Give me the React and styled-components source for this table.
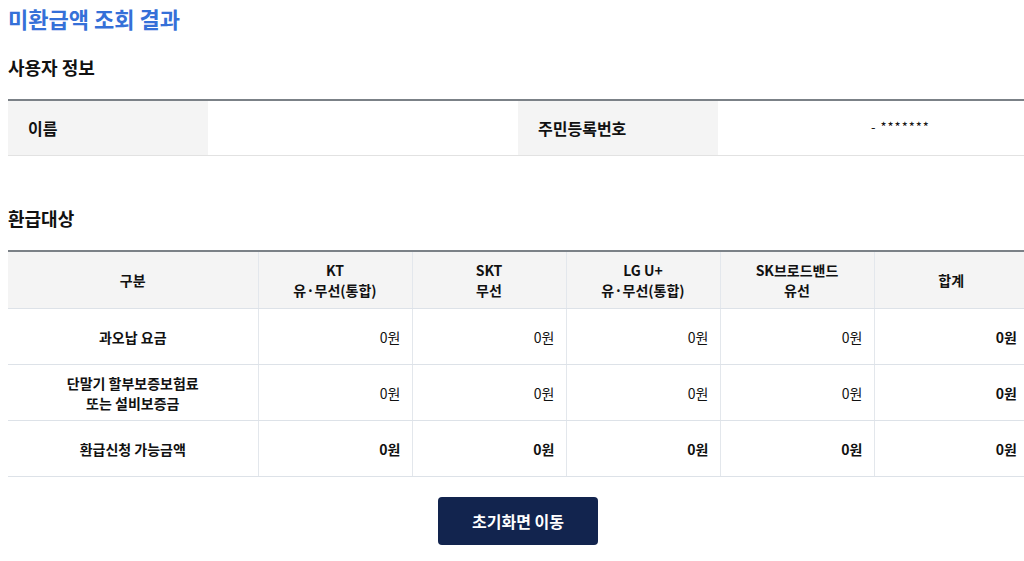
import React from 'react'
import styled, { createGlobalStyle } from 'styled-components'

const GlobalStyle = createGlobalStyle`
  html, body {
    margin: 0;
    padding: 0;
    overflow: hidden;
    background: #fff;
  }
  body {
    font-family: "Noto Sans CJK KR", "Noto Sans", sans-serif;
    color: #111;
  }
`

const Page = styled.div`
  width: 1020px;
  padding: 0 8px;
`

const Title = styled.h1`
  margin: 6px 0 0;
  font-size: 22px;
  line-height: 24px;
  font-weight: 700;
  color: #3570d8;
`

const SectionTitle = styled.h2`
  margin: ${props => props.$top}px 0 20px;
  font-size: 18px;
  line-height: 24px;
  font-weight: 700;
  color: #111;
`

const InfoTable = styled.div`
  display: grid;
  grid-template-columns: 200px 310px 200px 310px;
  border-top: 2px solid #7b8187;
  border-bottom: 1px solid #e2e2e2;
  height: 54px;
`

const InfoLabel = styled.div`
  display: flex;
  align-items: center;
  padding-left: 20px;
  background: #f4f4f4;
  font-size: 16px;
  font-weight: 700;
`

const InfoValue = styled.div`
  display: flex;
  align-items: center;
  padding-left: ${props => props.$indent || 0}px;
  padding-bottom: 4px;
  font-size: 13px;
  letter-spacing: 1px;
`

const Table = styled.table`
  width: 1020px;
  border-collapse: collapse;
  table-layout: fixed;
  border-top: 2px solid #7b8187;
  font-size: 14px;
`

const Th = styled.th`
  height: 56px;
  padding: 0;
  background: #f4f4f4;
  font-weight: 700;
  line-height: 20px;
  border-bottom: 1px solid #dde2e8;
  border-left: 1px solid #e3e7ec;
  &:first-child { border-left: none; }
`

const RowHead = styled.td`
  height: 55px;
  padding: 0;
  text-align: center;
  font-weight: 700;
  line-height: 20px;
  border-bottom: 1px solid #dde2e8;
`

const Amount = styled.td`
  padding: 0 11px 0 0;
  text-align: right;
  font-weight: ${props => (props.$bold ? 700 : 400)};
  border-bottom: 1px solid #dde2e8;
  border-left: 1px solid #e3e7ec;
`

const Actions = styled.div`
  display: flex;
  justify-content: center;
  margin-top: 20px;
`

const Button = styled.button`
  width: 160px;
  height: 48px;
  border: none;
  border-radius: 4px;
  background: #12244e;
  color: #fff;
  font-family: inherit;
  font-size: 16px;
  font-weight: 700;
  cursor: pointer;
`

const columns = [
  ['KT', '유·무선(통합)'],
  ['SKT', '무선'],
  ['LG U+', '유·무선(통합)'],
  ['SK브로드밴드', '유선'],
]

const rows = [
  { label: ['과오납 요금'], bold: false },
  { label: ['단말기 할부보증보험료', '또는 설비보증금'], bold: false },
  { label: ['환급신청 가능금액'], bold: true },
]

const Lines = ({ lines }) =>
  lines.map((line, i) => (
    <React.Fragment key={i}>
      {i > 0 && <br />}
      {line}
    </React.Fragment>
  ))

export default function App() {
  return (
    <Page>
      <GlobalStyle />
      <Title>미환급액 조회 결과</Title>

      <SectionTitle $top={25}>사용자 정보</SectionTitle>
      <InfoTable>
        <InfoLabel>이름</InfoLabel>
        <InfoValue />
        <InfoLabel>주민등록번호</InfoLabel>
        <InfoValue $indent={153}>- *******</InfoValue>
      </InfoTable>

      <SectionTitle $top={50}>환급대상</SectionTitle>
      <Table>
        <colgroup>
          <col style={{ width: 250 }} />
          {columns.map((_, i) => (
            <col key={i} style={{ width: 154 }} />
          ))}
          <col style={{ width: 154 }} />
        </colgroup>
        <thead>
          <tr>
            <Th>구분</Th>
            {columns.map((c, i) => (
              <Th key={i}>
                <Lines lines={c} />
              </Th>
            ))}
            <Th>합계</Th>
          </tr>
        </thead>
        <tbody>
          {rows.map((r, i) => (
            <tr key={i}>
              <RowHead>
                <Lines lines={r.label} />
              </RowHead>
              {columns.map((_, j) => (
                <Amount key={j} $bold={r.bold}>0원</Amount>
              ))}
              <Amount $bold>0원</Amount>
            </tr>
          ))}
        </tbody>
      </Table>

      <Actions>
        <Button type="button">초기화면 이동</Button>
      </Actions>
    </Page>
  )
}
